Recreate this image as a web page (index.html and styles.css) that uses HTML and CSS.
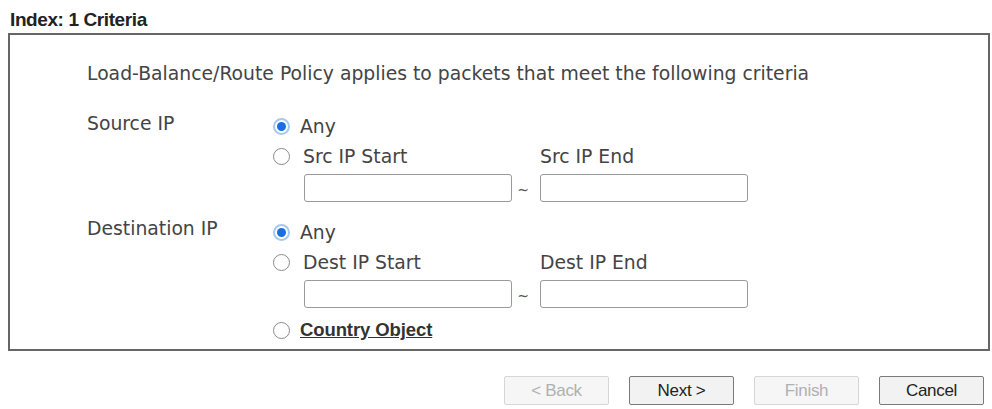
FILE: index.html
```html
<!DOCTYPE html>
<html>
<head>
<meta charset="utf-8">
<link rel="stylesheet" href="styles.css">
</head>
<body>
<div class="page">
  <div class="title">Index: 1 Criteria</div>
  <div class="box">
    <div class="intro">Load-Balance/Route Policy applies to packets that meet the following criteria</div>
    <div class="section src">
      <div class="label">Source IP</div>
      <div class="opts">
        <div class="row">
          <span class="radio on"></span><span class="opt">Any</span>
        </div>
        <div class="row">
          <span class="radio"></span><span class="opt sub start">Src IP Start</span><span class="opt">Src IP End</span>
        </div>
        <div class="inputs">
          <input type="text"><span class="tilde">~</span><input type="text">
        </div>
      </div>
    </div>
    <div class="section dst">
      <div class="label">Destination IP</div>
      <div class="opts">
        <div class="row">
          <span class="radio on"></span><span class="opt">Any</span>
        </div>
        <div class="row">
          <span class="radio"></span><span class="opt sub start">Dest IP Start</span><span class="opt">Dest IP End</span>
        </div>
        <div class="inputs">
          <input type="text"><span class="tilde">~</span><input type="text">
        </div>
        <div class="row country">
          <span class="radio"></span><a class="link">Country Object</a>
        </div>
      </div>
    </div>
  </div>
  <div class="buttons">
    <button class="btn" disabled>&lt; Back</button>
    <button class="btn">Next &gt;</button>
    <button class="btn" disabled>Finish</button>
    <button class="btn">Cancel</button>
  </div>
</div>
</body>
</html>
```
FILE: styles.css
```css
html, body {
  margin: 0;
  padding: 0;
  background: #fff;
}
.page {
  padding: 0 2px 0 8px;
  font-family: "DejaVu Sans", Verdana, sans-serif;
  color: #444;
}
.title {
  font-family: "Liberation Sans", Arial, sans-serif;
  font-weight: bold;
  font-size: 19px;
  letter-spacing: -0.4px;
  line-height: 22px;
  padding: 9px 0 0 2px;
  height: 33px;
  box-sizing: border-box;
  color: #222;
}
.box {
  border: 2px solid #666;
  height: 318px;
  box-sizing: border-box;
  padding: 27px 0 0 77px;
  font-size: 18.8px;
}
.intro {
  line-height: 24px;
  height: 24px;
  margin-bottom: 25px;
  white-space: nowrap;
}
.section {
  display: flex;
}
.section.dst {
  margin-top: 12px;
}
.label {
  width: 185px;
  flex: none;
  line-height: 30px;
  margin-top: -2px;
}
.dst .label {
  margin-top: -3px;
}
.opts {
  display: flex;
  flex-direction: column;
}
.row {
  height: 30px;
  display: flex;
  align-items: center;
  white-space: nowrap;
}
.radio {
  width: 17px;
  height: 17px;
  border: 1px solid #8a8a8a;
  border-radius: 50%;
  box-sizing: border-box;
  margin: 0 10px 0 1px;
  background: #fff;
  position: relative;
  flex: none;
}
.radio.on {
  border: 2px solid #a8c8f0;
}
.radio.on::after {
  content: "";
  position: absolute;
  left: 2px;
  top: 2px;
  width: 9px;
  height: 9px;
  border-radius: 50%;
  background: #1a6fe0;
}
.start {
  width: 240px;
  padding-left: 3px;
  box-sizing: border-box;
}
.inputs {
  height: 34px;
  display: flex;
  align-items: center;
  padding-left: 32px;
}
.inputs input {
  width: 208px;
  height: 28px;
  box-sizing: border-box;
  border: 1px solid #9a9a9a;
  border-radius: 3px;
  margin: 0;
  padding: 0;
  background: #fff;
}
.tilde {
  width: 28px;
  text-align: center;
  font-size: 14px;
  padding: 4px 6px 0 0;
  box-sizing: border-box;
  color: #555;
}
.country {
  margin-top: 4px;
}
.link {
  font-family: "Liberation Sans", Arial, sans-serif;
  font-weight: bold;
  font-size: 18.5px;
  letter-spacing: -0.1px;
  text-decoration: underline;
  color: #333;
}
.buttons {
  display: flex;
  justify-content: flex-end;
  gap: 20px;
  padding: 25px 6px 0 0;
}
.btn {
  width: 105px;
  height: 29px;
  font-family: "Liberation Sans", Arial, sans-serif;
  font-size: 17px;
  letter-spacing: -0.3px;
  color: #222;
  background: #f2f2f2;
  border: 1px solid #7a7a7a;
  border-radius: 2px;
  padding: 0;
}
.btn:disabled {
  color: #b0b0b0;
  background: #f6f6f6;
  border-color: #d6d6d6;
}
```
